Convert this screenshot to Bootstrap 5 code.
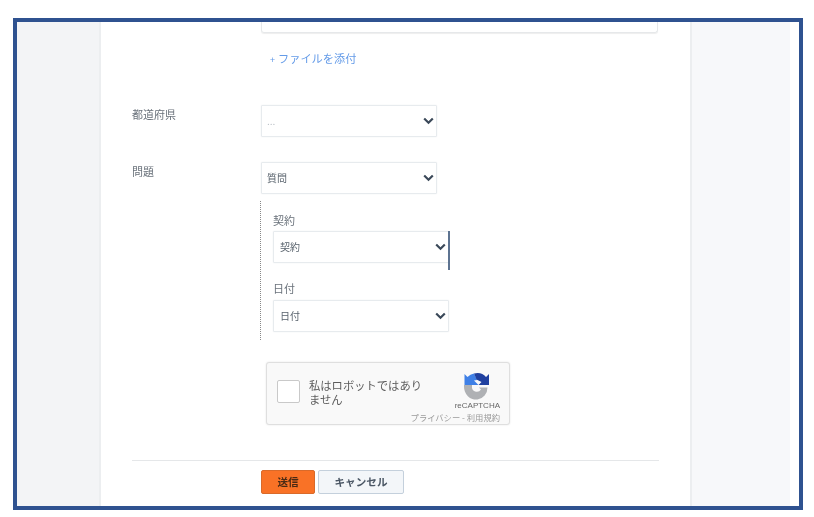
<!DOCTYPE html>
<html lang="ja">
<head>
<meta charset="utf-8">
<title>フォーム</title>
<link href="https://cdn.jsdelivr.net/npm/bootstrap@5.3.0/dist/css/bootstrap.min.css" rel="stylesheet">
<style>
html, body { height: 517px; overflow: hidden; background: #fff; }
body { font-family: "Noto Sans CJK JP", "Liberation Sans", sans-serif; color: #54606c; padding: 18px 11px 0 13px; }
.shot-frame { width: 790px; height: 492px; border: 4px solid #2f5290; overflow: hidden; background: #fff; }
.side-l { width: 82px; background: #f3f4f6; }
.side-r { width: 98px; background: #f7f8fa; }
.side-pad { width: 9px; }
.sheet { width: 593px; border-left: 2px solid #eceef0; border-right: 2px solid #eceef0; padding: 0 31px 0 31px; background: #fff; }
.ta-tail { height: 11px; width: 397px; margin-left: 129px; border: 1px solid #e6e8ea; border-top: 0; box-shadow: 0 1px 1px #eee; border-radius: 0 0 3px 3px; }
.attach { margin: 16px 0 0 138px; height: 18px; line-height: 18px; font-size: 11.2px; color: #649be8; display: block; text-decoration: none; }
.attach i { font-style: normal; font-size: 9px; margin-right: 3px; }
.f-row { display: flex; }
.f-first { margin-top: 38px; }
.f-next { margin-top: 25px; }
.f-label { width: 129px; font-size: 11px; line-height: 18px; color: #6a727b; }
.sel { width: 176px; height: 32px; padding: 0 24px 0 5px; font-size: 10px; line-height: 30px; color: #58626c; border: 1px solid #e7ebee; border-radius: 1px; box-shadow: 0 0 2px #f0f2f4;
  background-size: 11px 8px; background-position: right 2px center;
  background-image: url("data:image/svg+xml,%3csvg xmlns='http://www.w3.org/2000/svg' viewBox='0 0 11 8'%3e%3cpath fill='none' stroke='%233c4a5a' stroke-width='2.2' d='M1.2 1.5l4.3 4.300 4.300-4.300'/%3e%3c/svg%3e"); }
.sel-muted { color: #b5bbc2; }
.nest { margin: 7px 0 0 128px; height: 139px; width: 200px; border-left: 1px dotted #888; padding-left: 12px; position: relative; }
.nest .sel { padding-left: 6px; }
.nest-label { font-size: 11px; line-height: 14px; color: #6a727b; }
.nest-top { padding-top: 12px; }
.nest-gap { margin-top: 18px; }
.sel-gap { margin-top: 5px; }
.nest-tick { position: absolute; left: 187px; top: 30px; width: 1.5px; height: 39px; background: #5d7391; }
.robot { margin: 22px 0 0 134px; width: 244px; height: 63px; background: #f9f9f9; border: 1px solid #dfdfdf; border-radius: 3px; box-shadow: 0 0 2px #e4e4e4; padding: 17px 9px 0 10px; }
.robot-box { width: 23px; height: 23px; background: #fff; border: 1px solid #c9c9c9; border-radius: 2px; flex: none; }
.robot-text { width: 114px; flex: none; margin: -2px -20px 0 9px; font-size: 11.3px; line-height: 14px; color: #5c5c5c; }
.robot-brand { flex: none; margin-left: auto; margin-top: -8px; text-align: right; }
.robot-logo { display: block; margin: 0 10px 0 auto; }
.robot-name { font-size: 8px; line-height: 10px; color: #666; margin-top: 1px; font-family: "Liberation Sans", sans-serif; }
.robot-links { font-size: 8.3px; line-height: 10px; color: #9a9a9a; margin-top: 1px; white-space: nowrap; }
.rule { margin: 35px 0 0 0; border: 0; border-top: 1px solid #e5e7e9; opacity: 1; }
.act-row { margin: 9px 0 0 129px; display: flex; gap: 3px; }
.btn-send, .btn-cancel { height: 24px; padding: 0; font-size: 10.6px; font-weight: 700; line-height: 22px; border-radius: 2px; }
.btn-send { width: 54px; background: #f97226; border: 1px solid #d96a2a; color: #4a2a14; }
.btn-cancel { width: 86px; background: #f3f6f9; border: 1px solid #c4d0dc; color: #4a5664; }
.soft { filter: blur(.45px); }
</style>
</head>
<body>
<div class="shot-frame d-flex">
  <div class="side-l"></div>
  <main class="sheet soft">
    <div class="ta-tail"></div>
    <a class="attach" href="#"><i>+</i>ファイルを添付</a>
    <div class="f-row f-first">
      <div class="f-label">都道府県</div>
      <select class="form-select sel sel-muted" aria-label="都道府県"><option>...</option></select>
    </div>
    <div class="f-row f-next">
      <div class="f-label">問題</div>
      <select class="form-select sel" aria-label="問題"><option>質問</option></select>
    </div>
    <div class="nest">
      <div class="nest-label nest-top">契約</div>
      <select class="form-select sel mt-1" aria-label="契約"><option>契約</option></select>
      <span class="nest-tick"></span>
      <div class="nest-label nest-gap">日付</div>
      <select class="form-select sel sel-gap" aria-label="日付"><option>日付</option></select>
    </div>
    <div class="robot d-flex">
      <span class="robot-box"></span>
      <div class="robot-text">私はロボットではありません</div>
      <div class="robot-brand">
        <svg class="robot-logo" width="27" height="28" viewBox="0 0 27 28" aria-hidden="true">
          <path fill="#afb1b4" d="M1 13h8v3a5 5 0 0 0 9 1.500l-2-2h8.500a11 12 0 0 1-10 12A12 13 0 0 1 1 14z"/>
          <path fill="#3f80e6" d="M11 1.500A12 12 0 0 0 4.500 5L1.500 2v11h14L11 8.500 14 8z"/>
          <path fill="#20409f" d="M11 1.500c5-1.500 9 0 12 3.500l3-3v11H15.500l3-3-5-2.500z"/>
        </svg>
        <div class="robot-name">reCAPTCHA</div>
        <div class="robot-links">プライバシー - 利用規約</div>
      </div>
    </div>
    <hr class="rule">
    <div class="act-row">
      <button type="button" class="btn btn-send">送信</button>
      <button type="button" class="btn btn-cancel">キャンセル</button>
    </div>
  </main>
  <div class="side-r"></div>
  <div class="side-pad"></div>
</div>
<script src="https://cdn.jsdelivr.net/npm/bootstrap@5.3.0/dist/js/bootstrap.bundle.min.js"></script>
</body>
</html>
